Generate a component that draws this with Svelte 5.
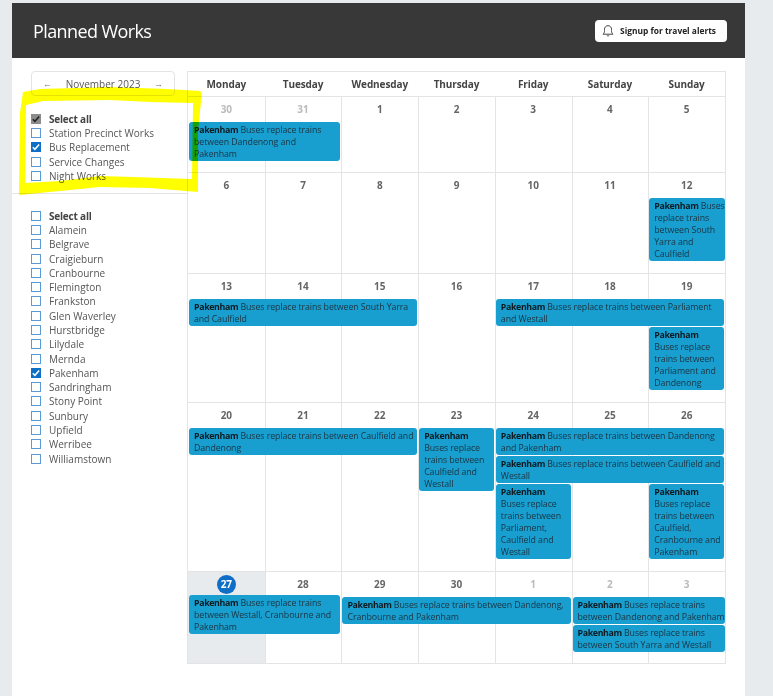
<script>
	const days = ['Monday', 'Tuesday', 'Wednesday', 'Thursday', 'Friday', 'Saturday', 'Sunday'];
	const types = [
		{ name: 'Select all', bold: true, mixed: true },
		{ name: 'Station Precinct Works' },
		{ name: 'Bus Replacement', checked: true },
		{ name: 'Service Changes' },
		{ name: 'Night Works' }
	];
	const lines = ['Alamein', 'Belgrave', 'Craigieburn', 'Cranbourne', 'Flemington', 'Frankston', 'Glen Waverley', 'Hurstbridge', 'Lilydale', 'Mernda', 'Pakenham', 'Sandringham', 'Stony Point', 'Sunbury', 'Upfield', 'Werribee', 'Williamstown'];

	// events: col = start column (1 based), span = days, row = grid row (date sits in row 1)
	const weeks = [
		{
			height: 76,
			dates: [[30, true], [31, true], [1], [2], [3], [4], [5]],
			events: [{ col: 1, span: 2, row: 2, text: 'Buses replace trains between Dandenong and Pakenham' }]
		},
		{
			height: 101,
			dates: [[6], [7], [8], [9], [10], [11], [12]],
			events: [{ col: 7, span: 1, row: 2, tight: true, text: 'Buses replace trains between South Yarra and Caulfield' }]
		},
		{
			height: 129,
			dates: [[13], [14], [15], [16], [17], [18], [19]],
			events: [
				{ col: 1, span: 3, row: 2, text: 'Buses replace trains between South Yarra and Caulfield' },
				{ col: 5, span: 3, row: 2, text: 'Buses replace trains between Parliament and Westall' },
				{ col: 7, span: 1, row: 3, text: 'Buses replace trains between Parliament and Dandenong' }
			]
		},
		{
			height: 169,
			dates: [[20], [21], [22], [23], [24], [25], [26]],
			events: [
				{ col: 1, span: 3, row: 2, text: 'Buses replace trains between Caulfield and Dandenong' },
				{ col: 4, span: 1, row: '2 / 5', text: 'Buses replace trains between Caulfield and Westall' },
				{ col: 5, span: 3, row: 2, text: 'Buses replace trains between Dandenong and Pakenham' },
				{ col: 5, span: 3, row: 3, text: 'Buses replace trains between Caulfield and Westall' },
				{ col: 5, span: 1, row: 4, text: 'Buses replace trains between Parliament, Caulfield and Westall' },
				{ col: 7, span: 1, row: 4, text: 'Buses replace trains between Caulfield, Cranbourne and Pakenham' }
			]
		},
		{
			height: 92,
			dates: [[27, false, true], [28], [29], [30], [1, true], [2, true], [3, true]],
			events: [
				{ col: 1, span: 2, row: '2 / 4', raised: true, text: 'Buses replace trains between Westall, Cranbourne and Pakenham' },
				{ col: 3, span: 3, row: 2, text: 'Buses replace trains between Dandenong, Cranbourne and Pakenham' },
				{ col: 6, span: 2, row: 2, tight: true, text: 'Buses replace trains between Dandenong and Pakenham' },
				{ col: 6, span: 2, row: 3, tight: true, text: 'Buses replace trains between South Yarra and Westall' }
			]
		}
	];
</script>

<div class="page">
	<header>
		<h1>Planned Works</h1>
		<button class="alerts">
			<svg width="12" height="13" viewBox="0 0 12 13" fill="none" stroke="#444" stroke-width="1">
				<path d="M1 10.2h10c-1-1-1.5-1.7-1.5-3.7V5.2C9.5 3.200 8 1.700 6 1.700S2.500 3.200 2.500 5.200v1.300c0 2-.5 2.700-1.500 3.700z" />
				<path d="M4.800 11.500c.3.500 2.100.5 2.400 0" />
			</svg>
			Signup for travel alerts
		</button>
	</header>

	<div class="content">
		<aside>
			<div class="month">
				<span class="arrow">←</span>
				<span>November 2023</span>
				<span class="arrow">→</span>
			</div>
			<ul class="types">
				{#each types as t}
					<li class:bold={t.bold}>
						<span class="box" class:checked={t.checked} class:mixed={t.mixed}>
							{#if t.checked || t.mixed}
								<svg width="10" height="10" viewBox="0 0 11 11" fill="none" stroke={t.mixed ? '#222' : '#fff'} stroke-width="1.700"><path d="M2 5.800l2.300 2.300L9 2.800" /></svg>
							{/if}
						</span>
						{t.name}
					</li>
				{/each}
			</ul>
			<ul class="lines">
				<li class="bold"><span class="box"></span>Select all</li>
				{#each lines as line}
					<li>
						<span class="box" class:checked={line === 'Pakenham'}>
							{#if line === 'Pakenham'}
								<svg width="10" height="10" viewBox="0 0 11 11" fill="none" stroke="#fff" stroke-width="1.700"><path d="M2 5.800l2.300 2.300L9 2.800" /></svg>
							{/if}
						</span>
						{line}
					</li>
				{/each}
			</ul>
		</aside>

		<section class="calendar">
			<div class="dayhead">
				{#each days as d}<div>{d}</div>{/each}
			</div>
			{#each weeks as w}
				<div class="week" style="height: {w.height}px">
					{#each w.dates as [n, muted, today], i}
						<div class="cell" class:today style="grid-column: {i + 1}"></div>
						<div class="date" class:muted style="grid-column: {i + 1}">
							{#if today}<span class="now">{n}</span>{:else}{n}{/if}
						</div>
					{/each}
					{#each w.events as e}
						<div class="event" class:tight={e.tight} class:raised={e.raised} style="grid-column: {e.col} / span {e.span}; grid-row: {e.row}">
							<b>Pakenham</b> {e.text}
						</div>
					{/each}
				</div>
			{/each}
		</section>
	</div>

	<!-- marker scribble someone drew on top of the screenshot -->
	<svg class="marker" width="200" height="200" viewBox="12 3 200 200">
		<path fill="#ffff00" fill-rule="evenodd" d="M23 92L40 89L110 87L167 89L200 91L202 93L198 130L198 192L150 188L100 187L60 191L19 195L20 113Z M26 105L25 183L60 181L100 176L133 177L192 179L193 107L193 103L150 102L110 100L43 101Z" />
	</svg>
</div>

<style>
	:global(body) {
		background: #e7ebee;
		font-family: "Open Sans", "Noto Sans", sans-serif;
		color: #555;
	}

	.page {
		position: relative;
		width: 733px;
		height: 693px;
		margin: 3px 0 0 12px;
		background: #fff;
		overflow: hidden;
	}

	header {
		height: 55px;
		background: #383838;
		display: flex;
		align-items: center;
		justify-content: space-between;
		padding: 0 18px 0 21px;
	}

	h1 {
		margin: 0;
		color: #fff;
		font-size: 18px;
		font-weight: 400;
		letter-spacing: -0.6px;
	}

	.alerts {
		display: flex;
		align-items: center;
		gap: 6px;
		height: 22px;
		padding: 0 11px 0 7px;
		background: #fff;
		border: none;
		border-radius: 4px;
		font-family: inherit;
		font-size: 8.400px;
		font-weight: 700;
		color: #222;
	}

	.content {
		display: flex;
		padding-top: 13px;
	}

	aside {
		width: 175px;
		flex: none;
	}

	.month {
		margin-left: 19px;
		width: 144px;
		height: 25px;
		box-sizing: border-box;
		border: 1px solid #e4e4e4;
		border-radius: 4px;
		display: flex;
		align-items: center;
		justify-content: space-between;
		padding: 0 11px;
		font-size: 10px;
		color: #555;
	}

	.arrow {
		font-size: 9px;
		color: #777;
	}

	ul {
		list-style: none;
		margin: 0;
		padding: 0 0 0 19px;
		font-size: 10px;
	}

	.types {
		padding-top: 15.500px;
		padding-bottom: 10.500px;
		border-bottom: 1px solid #e4e4e4;
	}

	.lines {
		padding-top: 14px;
	}

	li {
		height: 14.300px;
		display: flex;
		align-items: center;
		gap: 8px;
		white-space: nowrap;
	}

	li.bold {
		font-weight: 700;
		color: #444;
		letter-spacing: -0.2px;
	}

	.box {
		width: 8px;
		height: 8px;
		flex: none;
		border: 1px solid #5b9bd5;
		display: flex;
		align-items: center;
		justify-content: center;
	}

	.box svg {
		flex: none;
	}

	.box.checked {
		background: #0f6fc6;
		border-color: #0f6fc6;
	}

	.box.mixed {
		background: #8c8c8c;
		border-color: #8c8c8c;
	}

	.calendar {
		width: 539px;
		flex: none;
		border: 1px solid #e4e4e4;
		box-sizing: border-box;
		height: 593px;
	}

	.dayhead {
		display: grid;
		grid-template-columns: repeat(7, 1fr);
		height: 24px;
		align-items: center;
		text-align: center;
		font-size: 10px;
		font-weight: 700;
		letter-spacing: -0.1px;
		color: #444;
	}

	.week {
		display: grid;
		grid-template-columns: repeat(7, 1fr);
		grid-template-rows: 25px auto auto auto 1fr;
		border-top: 1px solid #e4e4e4;
		box-sizing: border-box;
		position: relative;
	}

	.cell {
		grid-row: 1 / -1;
		border-left: 1px solid #e4e4e4;
	}

	.cell:first-child {
		border-left: none;
	}

	.cell.today {
		background: #e7ebee;
	}

	.date {
		grid-row: 1;
		height: 24px;
		text-align: center;
		line-height: 24px;
		font-size: 10px;
		font-weight: 700;
		color: #666;
		position: relative;
	}

	.date.muted {
		color: #bbb;
	}

	.now {
		display: inline-block;
		width: 19px;
		height: 19px;
		line-height: 19px;
		border-radius: 50%;
		background: #0f6fc6;
		color: #fff;
	}

	.event {
		position: relative;
		margin: 0 1px 1px 1px;
		padding: 2px 3px 1px 5px;
		background: #189fd0;
		border-radius: 3px;
		color: #1c3340;
		font-size: 8.800px;
		letter-spacing: -0.08px;
		line-height: 12px;
		align-self: start;
	}

	.event.tight {
		margin-right: 0;
		padding-right: 0;
	}

	.event.raised {
		margin-top: -2px;
	}

	.event b {
		color: #0e1a20;
		letter-spacing: -0.35px;
	}

	.marker {
		position: absolute;
		left: 0;
		top: 0;
		mix-blend-mode: multiply;
		pointer-events: none;
	}
</style>
